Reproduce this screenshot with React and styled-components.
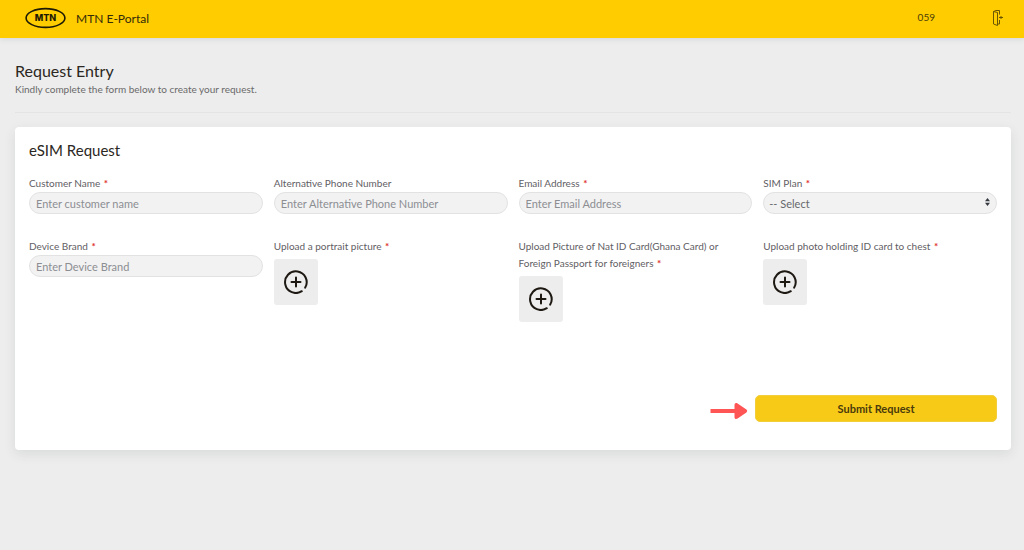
import React from "react";
import styled, { createGlobalStyle } from "styled-components";

const fields = [
  {
    id: "customerName",
    label: "Customer Name",
    required: true,
    placeholder: "Enter customer name"
  },
  {
    id: "altPhone",
    label: "Alternative Phone Number",
    placeholder: "Enter Alternative Phone Number"
  },
  {
    id: "email",
    label: "Email Address",
    required: true,
    placeholder: "Enter Email Address"
  },
  { id: "simPlan", label: "SIM Plan", required: true, type: "select" },
  {
    id: "deviceBrand",
    label: "Device Brand",
    required: true,
    placeholder: "Enter Device Brand"
  },
  {
    id: "portrait",
    label: "Upload a portrait picture",
    required: true,
    type: "upload"
  },
  {
    id: "idCard",
    label: "Upload Picture of Nat ID Card(Ghana Card) or Foreign Passport for foreigners",
    required: true,
    type: "upload"
  },
  {
    id: "holdingId",
    label: "Upload photo holding ID card to chest",
    required: true,
    type: "upload"
  }
];

function App() {
  return (
    <>
      <GlobalStyle />
      <Header>
        <Brand href="#">
          <Logo />
          MTN E-Portal
        </Brand>
        <UserCode>059</UserCode>
        <LogoutButton type="button" aria-label="Log out">
          <ExitIcon />
        </LogoutButton>
      </Header>

      <Main>
        <Intro>
          <PageTitle>Request Entry</PageTitle>
          <Hint>Kindly complete the form below to create your request.</Hint>
        </Intro>

        <Card onSubmit={e => e.preventDefault()}>
          <CardTitle>eSIM Request</CardTitle>
          <Fields>
            {fields.map(item => (
              <Field key={item.id} {...item} />
            ))}
          </Fields>
          <Actions>
            <ArrowIcon />
            <SubmitButton type="submit">Submit Request</SubmitButton>
          </Actions>
        </Card>
      </Main>
    </>
  );
}

const Field = ({ id, label, required, placeholder, type }) => {
  return (
    <FieldBox>
      <Label htmlFor={id}>
        {label} {required && <Required>*</Required>}
      </Label>
      {type === "select" && (
        <SelectWrap>
          <Select id={id} defaultValue="">
            <option value="">-- Select</option>
          </Select>
          <SelectArrows />
        </SelectWrap>
      )}
      {type === "upload" && (
        <UploadButton id={id} type="button">
          <PlusIcon />
        </UploadButton>
      )}
      {!type && <Input id={id} type="text" placeholder={placeholder} />}
    </FieldBox>
  );
};

const Logo = () => (
  <svg width="42" height="22" viewBox="0 0 42 22" aria-hidden="true">
    <ellipse
      cx="21.5"
      cy="11"
      rx="19.4"
      ry="9.4"
      fill="none"
      stroke="#1d1a05"
      strokeWidth="1.6"
    />
    <text
      x="21.5"
      y="14.4"
      textAnchor="middle"
      fontFamily="Inter, sans-serif"
      fontSize="9"
      fontWeight="800"
      fill="#1d1a05"
    >
      MTN
    </text>
  </svg>
);

const ExitIcon = () => (
  <svg width="12" height="18" viewBox="0 0 12 18" fill="none" stroke="#6b5703">
    <path d="M1.5 2.5 L5.5 3.5 V16.5 L1.5 15 Z" />
    <path d="M1.5 2.5 L4 1.5 H7.5 V5.5" />
    <path d="M5.5 15 H7.5 V11" />
    <path d="M7 8.5 H11 M9 7 V10" />
  </svg>
);

const PlusIcon = () => (
  <svg
    width="24"
    height="24"
    viewBox="0 0 24 24"
    fill="none"
    stroke="#1d1812"
    strokeWidth="2"
    strokeLinecap="round"
    aria-hidden="true"
  >
    <path d="M17.8 21.2 A10.8 10.8 0 1 1 21.2 17.6" />
    <path d="M12 7.5 V16.5 M7.5 12 H16.5" />
  </svg>
);

const SelectArrows = () => (
  <Arrows width="5" height="8" viewBox="0 0 5 8" aria-hidden="true">
    <path d="M2.5 0 L5 3.2 H0 Z M2.5 8 L5 4.8 H0 Z" fill="#343a40" />
  </Arrows>
);

const ArrowIcon = () => (
  <svg width="38" height="22" viewBox="0 -2 38 22" aria-hidden="true">
    <path
      d="M.5 7 H24.5 V3 C24.5 1 26 .4 27.6 1.4 L36.4 7.6 C37.5 8.5 37.5 9.5 36.4 10.4 L27.6 16.6 C26 17.6 24.5 17 24.5 15 V11 H.5 Z"
      fill="#ff5555"
    />
  </svg>
);

const pill = `
  display: block;
  width: 100%;
  height: 22px;
  border: 1px solid #e2e2e2;
  border-radius: 11px;
  background: #f2f2f2;
  font-size: 11px;
  outline: none;
`;

const GlobalStyle = createGlobalStyle`
  * {
    box-sizing: border-box;
  }

  body {
    margin: 0;
    background: #ededed;
    color: #2b2722;
    font-family: Lato, "Liberation Sans", sans-serif;
  }

  button, input, select {
    font-family: inherit;
  }
`;

const Header = styled.header`
  display: flex;
  align-items: center;
  height: 38px;
  padding: 0 20px 2px 24px;
  background: #ffcc00;
  box-shadow: 0 1px 6px rgba(60, 70, 90, 0.14);
`;

const Brand = styled.a`
  display: flex;
  align-items: center;
  gap: 10px;
  margin-right: auto;
  color: #332b0a;
  font-size: 12px;
  text-decoration: none;
`;

const UserCode = styled.span`
  margin-right: 57px;
  padding-bottom: 2px;
  color: #4a3d08;
  font-size: 10px;
`;

const LogoutButton = styled.button`
  display: flex;
  padding: 0;
  border: 0;
  background: none;
`;

const Main = styled.main`
  padding: 23px 13px 24px 15px;
`;

const Intro = styled.div`
  margin-bottom: 14px;
  padding-bottom: 15px;
  border-bottom: 1px solid #e4e4e4;
`;

const PageTitle = styled.h1`
  margin: 0;
  font-size: 16px;
  font-weight: 400;
  line-height: 20px;
`;

const Hint = styled.p`
  margin: 0;
  color: #6a6a6a;
  font-size: 10px;
  line-height: 16px;
`;

const Card = styled.form`
  padding: 13px 14px 28px;
  border-radius: 4px;
  background: #fff;
  box-shadow: 0 4px 12px rgba(40, 55, 50, 0.1);
`;

const CardTitle = styled.h2`
  margin: 0 0 15px;
  font-size: 15px;
  font-weight: 400;
  line-height: 20px;
`;

const Fields = styled.div`
  display: grid;
  grid-template-columns: repeat(4, 1fr);
  gap: 24px 11px;
`;

const FieldBox = styled.div`
  min-width: 0;
`;

const Label = styled.label`
  display: block;
  color: #5f6064;
  font-size: 10px;
  line-height: 17px;
`;

const Required = styled.span`
  margin-left: 1px;
  color: #e0302c;
  font-weight: 700;
`;

const Input = styled.input`
  ${pill}
  padding: 0 6px;

  &::placeholder {
    color: #8c8e92;
  }
`;

const SelectWrap = styled.div`
  position: relative;
`;

const Select = styled.select`
  ${pill}
  padding: 0 5px;
  appearance: none;
  color: #66686c;
`;

const Arrows = styled.svg`
  position: absolute;
  top: 6px;
  right: 7px;
  pointer-events: none;
`;

const UploadButton = styled.button`
  display: flex;
  align-items: center;
  justify-content: center;
  width: 44px;
  height: 46px;
  margin-top: 4px;
  padding: 0;
  border: 0;
  border-radius: 3px;
  background: #ededed;
`;

const Actions = styled.div`
  display: flex;
  align-items: flex-end;
  justify-content: flex-end;
  gap: 7px;
  margin-top: 73px;
`;

const SubmitButton = styled.button`
  width: 25%;
  height: 27px;
  border: 1px solid #f2cd3c;
  border-radius: 5px;
  background: #f7ca18;
  color: #4a3b0c;
  font-size: 11px;
  font-weight: 700;
`;

export default App;
